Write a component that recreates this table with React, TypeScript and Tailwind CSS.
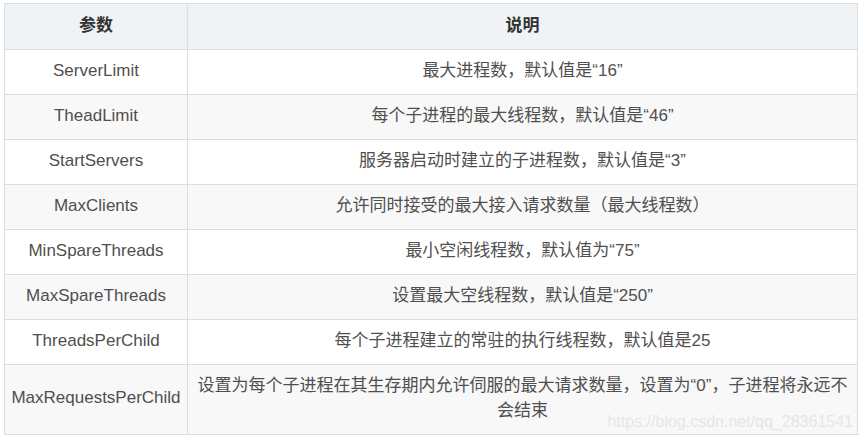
const rows: [string, string][] = [
  ["ServerLimit", "最大进程数，默认值是“16”"],
  ["TheadLimit", "每个子进程的最大线程数，默认值是“46”"],
  ["StartServers", "服务器启动时建立的子进程数，默认值是“3”"],
  ["MaxClients", "允许同时接受的最大接入请求数量（最大线程数）"],
  ["MinSpareThreads", "最小空闲线程数，默认值为“75”"],
  ["MaxSpareThreads", "设置最大空线程数，默认值是“250”"],
  ["ThreadsPerChild", "每个子进程建立的常驻的执行线程数，默认值是25"],
  [
    "MaxRequestsPerChild",
    "设置为每个子进程在其生存期内允许伺服的最大请求数量，设置为“0”，子进程将永远不会结束",
  ],
];

export default function App() {
  return (
    <div
      className="relative h-[439px] w-[860px] bg-white pl-[4px] pt-[3px] text-[17px] text-[#4f4f4f]"
      style={{ fontFamily: '"Liberation Sans", "Noto Sans CJK SC", sans-serif' }}
    >
      <table className="w-[854px] table-fixed border-collapse">
        <colgroup>
          <col className="w-[183px]" />
          <col />
        </colgroup>
        <thead>
          <tr className="h-[46px] bg-[#eff3f5]">
            <th className="border border-[#dddddd] pb-[2px] font-bold text-[#333333]">参数</th>
            <th className="border border-[#dddddd] pb-[2px] font-bold text-[#333333]">说明</th>
          </tr>
        </thead>
        <tbody>
          {rows.map(([name, desc], i) => (
            <tr
              key={name}
              className={`${i % 2 === 0 ? "bg-white" : "bg-[#f8f8f8]"} ${
                i === rows.length - 1 ? "h-[70px]" : "h-[45px]"
              }`}
            >
              <td className="border border-[#dddddd] pb-[3px] text-center">{name}</td>
              <td className="border border-[#dddddd] px-[8px] pb-[3px] text-center leading-[25px]">
                {desc}
              </td>
            </tr>
          ))}
        </tbody>
      </table>
      {/* watermark */}
      <span className="absolute right-[7px] top-[410px] text-[16px] text-[#e6e6e6]">
        https://blog.csdn.net/qq_28361541
      </span>
    </div>
  );
}
